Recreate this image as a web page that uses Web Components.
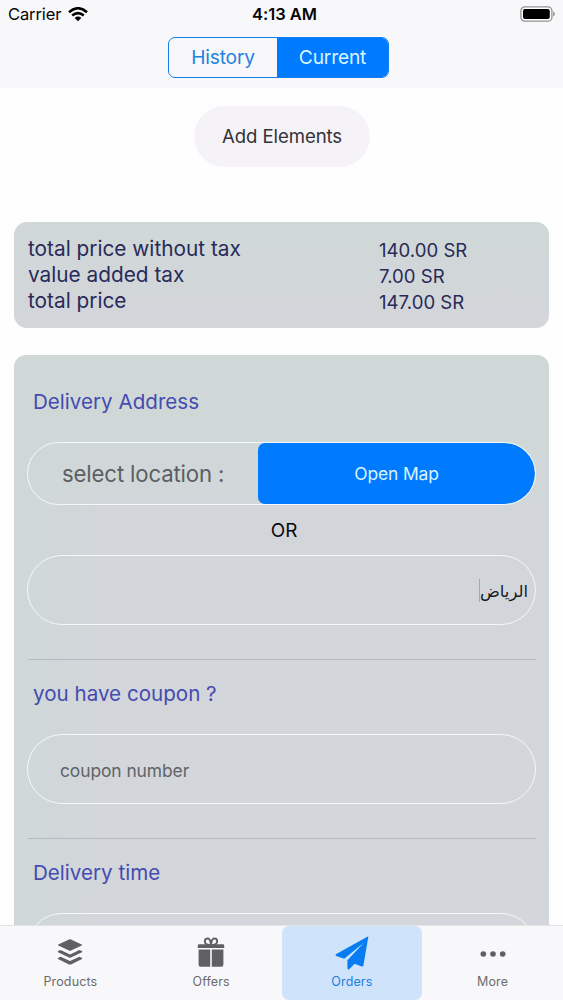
<!DOCTYPE html>
<html lang="en"><head><meta charset="utf-8"><title>Orders</title>
<style>html,body{margin:0;height:100%;overflow:hidden;background:#fefefe;font-family:Inter,"Open Sans","DejaVu Sans",sans-serif}</style></head>
<body><orders-screen></orders-screen>
<script>
const define=(name,html)=>customElements.define(name,class extends HTMLElement{
  constructor(){super();this.attachShadow({mode:'open'}).innerHTML=html;}
});
define('status-bar',`<style>
:host{display:grid;grid-template-columns:1fr auto 1fr;align-items:center;height:29px;font-size:16.5px;line-height:29px;color:#050505}
.left{display:flex;align-items:center;gap:7px;padding-left:8px;letter-spacing:-.1px}
.time{font-weight:600;letter-spacing:-.02px;padding-left:6px}
.right{display:flex;justify-content:flex-end;padding-right:7px}svg{display:block}
.right svg{margin-top:-2px}
</style><div class="left"><span>Carrier</span><svg width="20" height="15" viewBox="0 0 20 15"><g fill="none" stroke="#050505" stroke-width="2.6"><path d="M1 5.2Q10-2.7 19 5.2"/><path d="M4.2 8.6Q10 3.7 15.8 8.6"/></g><path d="M6.7 11Q10 8.2 13.3 11L10 14.3Z"/></svg></div>
<span class="time">4:13 AM</span><div class="right"><svg width="36" height="16" viewBox="0 0 36 16"><rect x=".9" y=".8" width="31" height="14.4" rx="4" fill="#fff" stroke="#919192" stroke-width="1.3"/><rect x="3" y="2.9" width="26.8" height="10.2" rx="2" fill="#000"/><path d="M33.2 5.6q1.7.5 1.7 2.4t-1.7 2.4z" fill="#919192"/></svg></div>`);
define('segment-control',`<style>
:host{display:flex;width:221px;height:41px;box-sizing:border-box;border:1.5px solid #137fee;border-radius:7px;overflow:hidden;font-size:19.2px;letter-spacing:-.17px;line-height:39px;text-align:center;color:#2383df}
span{flex:1}.off{flex:0 0 108px}.on{background:#007bff;color:#d9f5ff}
</style><span class="off">History</span><span class="on">Current</span>`);
define('pill-button',`<style>
:host{display:flex;align-items:flex-start;justify-content:center;width:176px;height:61px;border-radius:31px;background:#f5f3f7;color:#343236;font-size:18.6px;letter-spacing:-.08px;line-height:61px}
</style><slot></slot>`);
define('price-row',`<style>
:host{display:grid;grid-template-columns:351px 1fr;height:26px;line-height:26px;color:#292a59;font-size:20.8px}
.v{font-size:18.6px;padding-top:1px}
</style><span class="k"><slot name="label"></slot></span><span class="v"><slot></slot></span>`);
define('price-card',`<style>
:host{display:block;margin:0 14px;height:106px;box-sizing:border-box;padding:14px 14px;border-radius:13px;background:linear-gradient(#d0d8d7,#d2d6d9 70%,#d4d6da)}
</style><slot></slot>`);
define('section-title',`<style>
:host{display:block;padding-left:5px;height:28px;line-height:28px;font-size:20.6px;color:#454bb0}
</style><slot></slot>`);
define('field-box',`<style>
:host{display:flex;align-items:center;box-sizing:border-box;height:70px;border:1.3px solid #f4f8f9;border-radius:35px;font-size:17.4px;letter-spacing:-.07px;color:#606467;padding:3px 0 0 32px}
</style><slot></slot>`);
define('city-field',`<style>
:host{display:flex;align-items:center;justify-content:flex-end;box-sizing:border-box;height:70px;border:1.3px solid #f4f8f9;border-radius:35px;padding:1px 7px 0 0;color:#171a1d;font:16.4px "DejaVu Sans",sans-serif}
i{width:1px;height:23px;background:#83afe2}span{padding-top:1px}
</style><i></i><span dir="rtl">الرياض</span>`);
define('location-picker',`<style>
:host{display:flex;box-sizing:border-box;height:63px;border:1.3px solid #f4f8f9;border-radius:32px;overflow:hidden;line-height:61px}
.l{width:230px;padding-left:34px;box-sizing:border-box;font-size:22.2px;letter-spacing:-.15px;color:#5b5f63}
.b{flex:1;border-radius:7px 31px 31px 7px;background:#007bff;color:#d9f5ff;text-align:center;font-size:17.4px;letter-spacing:-.1px}
</style><span class="l">select location :</span><span class="b">Open Map</span>`);
define('tab-item',`<style>
:host{flex:1;display:flex;flex-direction:column;align-items:center;color:#6c6c6f;font-size:12.5px;letter-spacing:.12px;border-radius:7px;padding-top:8px}
:host([active]){background:#cfe3fa;color:#207fe2}
.icon{height:36px;padding-bottom:2px;display:flex;align-items:center}
:host([active]) .icon{height:38px;padding:0}.label{line-height:19px}
</style><div class="icon"><slot name="icon"></slot></div><span class="label"><slot></slot></span>`);
define('tab-bar',`<style>
:host{display:flex;box-sizing:border-box;height:75px;flex:none;background:#f8f8fa;border-top:1px solid #e2e4e6;position:relative}
</style><slot></slot>`);
define('order-form',`<style>
:host{display:block;flex:1;min-height:0;overflow:hidden;box-sizing:border-box;margin:27px 14px 0;padding:33px 13px 0 14px;border-radius:12px 12px 0 0;background:linear-gradient(90deg,#cfd8d7,transparent 16%),linear-gradient(#d0d8d7,#d0d8d7 12%,#d2d6da 28%,#d3d6db)}
.or{height:50px;line-height:51px;text-align:center;font-size:18.9px;color:#090a0b;padding-left:4px}
hr{margin:0;border:0;height:1px;background:#b6bbc2}
section-title{margin-bottom:26px}
location-picker,field-box,city-field{margin-left:-1px}
.first{margin:34px 0 20px}.second{margin:34px 0 20px}
</style><section-title>Delivery Address</section-title><location-picker></location-picker><div class="or">OR</div><city-field></city-field><hr class="first"><section-title>you have coupon ?</section-title><field-box>coupon number</field-box><hr class="second"><section-title>Delivery time</section-title><field-box></field-box>`);
define('orders-screen',`<style>
:host{display:flex;flex-direction:column;height:1000px;width:563px;overflow:hidden}
header{height:88px;background:#f8f7fa;flex:none}
segment-control{margin:8px 0 0 168px}
pill-button{margin:18px 0 55px 194px;flex:none}
price-card{flex:none}
svg{display:block}
</style>
<header><status-bar></status-bar><segment-control></segment-control></header>
<pill-button>Add Elements</pill-button>
<price-card><price-row><span slot="label">total price without tax</span>140.00 SR</price-row><price-row><span slot="label">value added tax</span>7.00 SR</price-row><price-row><span slot="label">total price</span>147.00 SR</price-row></price-card>
<order-form></order-form>
<tab-bar>
<tab-item><svg slot="icon" width="26" height="26" viewBox="0 0 26 26" fill="#606063"><path d="M12 .5q1-.4 2 0l10.7 4.9q.7.5 0 1L14 11.6q-1 .4-2 0L1.3 6.4q-.7-.5 0-1z"/><path d="M1 12.1L3.6 11 13 15.4 22.4 11l2.6 1.1q.7.6 0 1.1L14 18.6q-1 .4-2 0L1 13.2q-.7-.5 0-1.1z"/><path d="M1 18.9l2.6-1.1L13 22l9.4-4.2 2.6 1.1q.7.6 0 1.1L14 25.4q-1 .4-2 0L1 20q-.7-.5 0-1.1z"/></svg>Products</tab-item>
<tab-item><svg slot="icon" width="28" height="32" viewBox="0 0 28 32"><g fill="none" stroke="#606063" stroke-width="2"><path d="M14 9Q8.2 9 7.8 5.5Q8 2.2 11 2.4Q13.5 3 14 9M14 9Q19.8 9 20.2 5.5Q20 2.2 17 2.4Q14.5 3 14 9"/></g><path fill="#606063" d="M2 8.2h24q1.2 0 1.2 1.2v2.6H.8V9.4Q.8 8.2 2 8.2zM1.6 13.5H13.2v17.3H3.6q-2 0-2-2zM14.8 13.5h11.6v15.3q0 2-2 2h-9.6z"/></svg>Offers</tab-item>
<tab-item active><svg slot="icon" width="34" height="34" viewBox="0 0 34 34" fill="#087cf3"><path d="M32.8.5Q33.4.1 33.3 1L28.4 29.5Q28.2 31 26.8 30.4L19.6 27.8 14.2 33.2Q12.6 34.2 12.4 32V24.2L28.8 6.8 9.2 22.8 1.3 19.9Q-.2 19 1.3 18.1Z"/></svg>Orders</tab-item>
<tab-item><svg slot="icon" width="26" height="6" viewBox="0 0 26 6" style="margin-top:3px" fill="#606063"><circle cx="3.3" cy="3" r="2.8"/><circle cx="13" cy="3" r="2.8"/><circle cx="22.7" cy="3" r="2.8"/></svg>More</tab-item>
</tab-bar>`);
</script></body></html>
